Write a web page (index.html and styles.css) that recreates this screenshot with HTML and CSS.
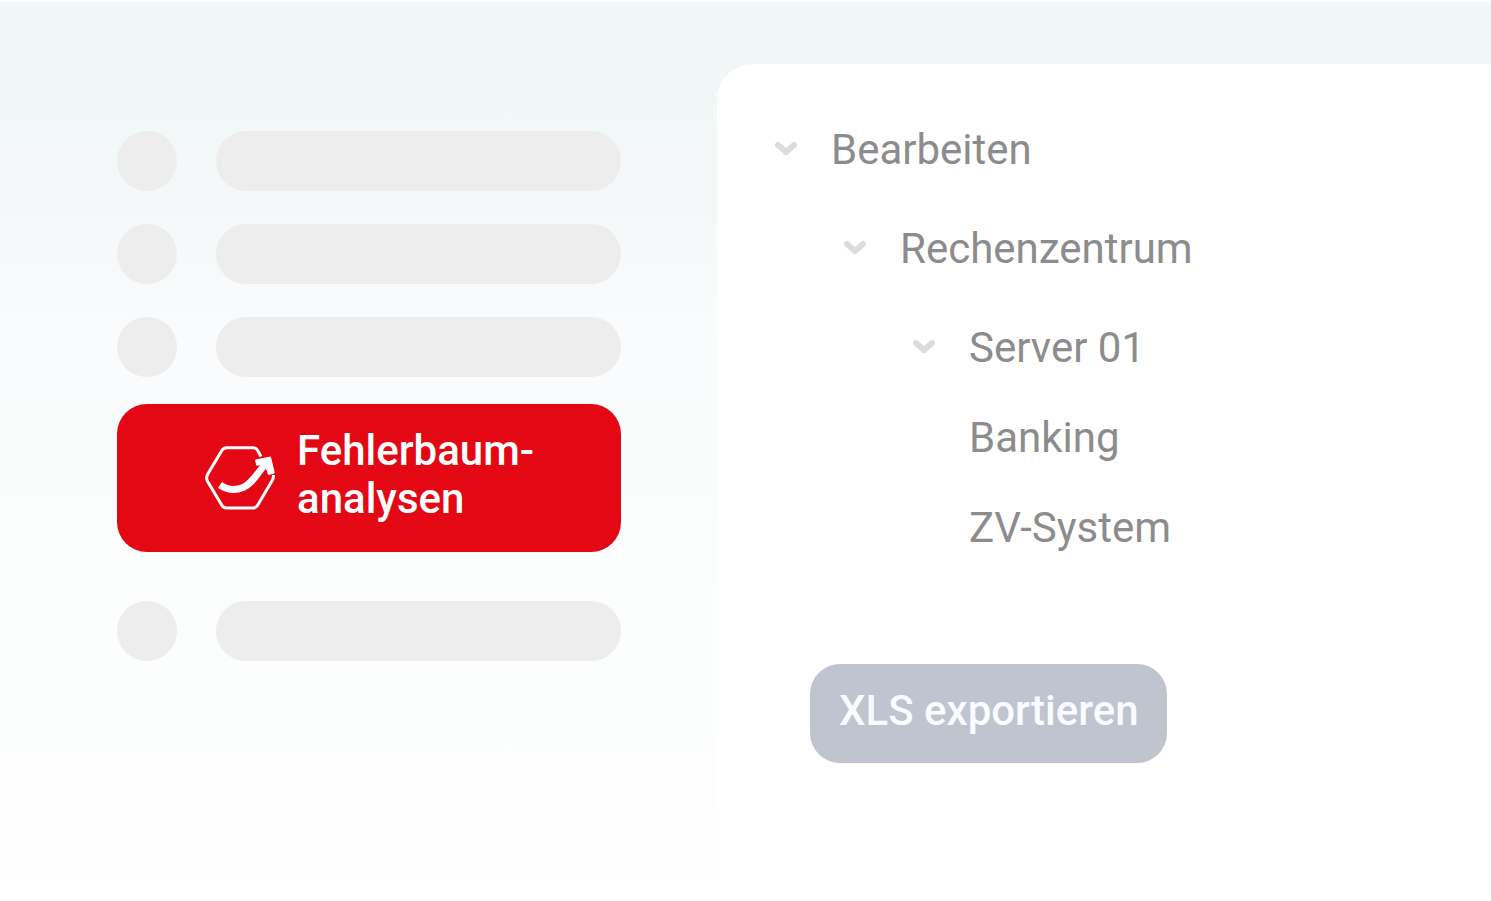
FILE: index.html
```html
<!DOCTYPE html>
<html lang="de">
<head>
<meta charset="utf-8">
<meta name="viewport" content="width=device-width, initial-scale=1">
<title>Fehlerbaumanalysen</title>
<link rel="stylesheet" href="styles.css">
</head>
<body>
<div class="app">
  <nav class="sidebar" aria-label="Module">
    <div class="placeholder"><span class="dot"></span><span class="bar"></span></div>
    <div class="placeholder"><span class="dot"></span><span class="bar"></span></div>
    <div class="placeholder"><span class="dot"></span><span class="bar"></span></div>
    <button class="module" type="button">
      <svg class="module-icon" viewBox="0 0 70 64" aria-hidden="true">
        <path d="M56 10.500 L52.500 4.200 Q51 1.700 48 1.700 H22 Q18.500 1.700 17 4.200 L2.500 28.500 Q.8 32 2.500 35.200 L17 59.500 Q18.500 62 22 62 H48 Q51 62 52.500 59.500 L67.200 34.500 Q68.600 32 68.400 29" fill="none" stroke="#fff" stroke-width="3"/>
        <path d="M15 39 Q26 46.500 38 41.500 C47 37.500 52 28 61 17" fill="none" stroke="#fff" stroke-width="7"/>
        <path d="M50.500 14 L65.500 11 L69.300 27 L63.500 28.500 L60 18 L51.700 19.200 Z" fill="#fff" stroke="#fff" stroke-width="1" stroke-linejoin="round"/>
      </svg>
      <span>Fehlerbaum-<br>analysen</span>
    </button>
    <div class="placeholder"><span class="dot"></span><span class="bar"></span></div>
  </nav>
  <main class="panel">
    <ul class="tree">
      <li>
        <button class="node" type="button" aria-expanded="true"><svg class="chevron" viewBox="0 0 24 24" aria-hidden="true"><path d="M4 7 L12 14 L20 7"/></svg>Bearbeiten</button>
        <ul class="branch">
          <li>
            <button class="node" type="button" aria-expanded="true"><svg class="chevron" viewBox="0 0 24 24" aria-hidden="true"><path d="M4 7 L12 14 L20 7"/></svg>Rechenzentrum</button>
            <ul class="branch">
              <li>
                <button class="node" type="button" aria-expanded="true"><svg class="chevron" viewBox="0 0 24 24" aria-hidden="true"><path d="M4 7 L12 14 L20 7"/></svg>Server 01</button>
                <ul class="leaves">
                  <li>Banking</li>
                  <li>ZV-System</li>
                </ul>
              </li>
            </ul>
          </li>
        </ul>
      </li>
    </ul>
    <button class="export" type="button">XLS exportieren</button>
  </main>
</div>
</body>
</html>
```
FILE: styles.css
```css
* {
  box-sizing: border-box;
}

body {
  margin: 0;
  background: #fff;
  font-family: Roboto, "Liberation Sans", sans-serif;
  font-size: 42px;
  line-height: 48px;
}

button {
  border: 0;
  font: inherit;
  text-align: left;
  cursor: pointer;
}

ul {
  margin: 0;
  padding: 0;
  list-style: none;
}

.app {
  display: grid;
  grid-template-columns: minmax(0, 717fr) minmax(0, 774fr);
  min-height: 100vh;
  border-top: 2px solid #fff;
  background: linear-gradient(#f1f7f7 0, #f1f7f7 90px, #f5f8f9 200px, #f9fbfc 330px, #fbfdfd 520px, #fcfdfd 700px, #fefefe 850px, #fff 880px);
}

.sidebar {
  display: flex;
  flex-direction: column;
  gap: 33px;
  padding: 129px 96px 64px 117px;
}

.placeholder {
  display: flex;
  gap: 39px;
}

.dot,
.bar {
  height: 60px;
  border-radius: 30px;
  background: #ededed;
}

.dot {
  flex: none;
  width: 60px;
}

.bar {
  flex: 1;
}

.module {
  display: flex;
  align-items: center;
  gap: 22px;
  margin: -6px 0 16px;
  padding: 23px 24px 29px 88px;
  border-radius: 30px;
  background: #e30813;
  color: #fff;
  font-weight: 500;
}

.module-icon {
  flex: none;
  width: 70px;
  height: 64px;
  margin-top: 6px;
}

.panel {
  margin-top: 62px;
  padding: 62px 57px 64px;
  border-top-left-radius: 36px;
  background: #fff;
  color: #8c8c8c;
}

.node {
  display: flex;
  align-items: center;
  gap: 33px;
  padding: 0;
  background: none;
  color: inherit;
}

.chevron {
  flex: none;
  width: 24px;
  height: 24px;
  fill: none;
  stroke: #dcdcdc;
  stroke-width: 6;
  stroke-linecap: round;
  stroke-linejoin: round;
}

.branch {
  margin: 51px 0 0 69px;
}

.leaves {
  display: grid;
  gap: 42px;
  margin: 42px 0 0 57px;
}

.export {
  margin: 112px 0 0 36px;
  padding: 23px 28px 28px 29px;
  border-radius: 30px;
  background: #bfc4cf;
  color: #f8fbff;
  font-weight: 500;
}
```
